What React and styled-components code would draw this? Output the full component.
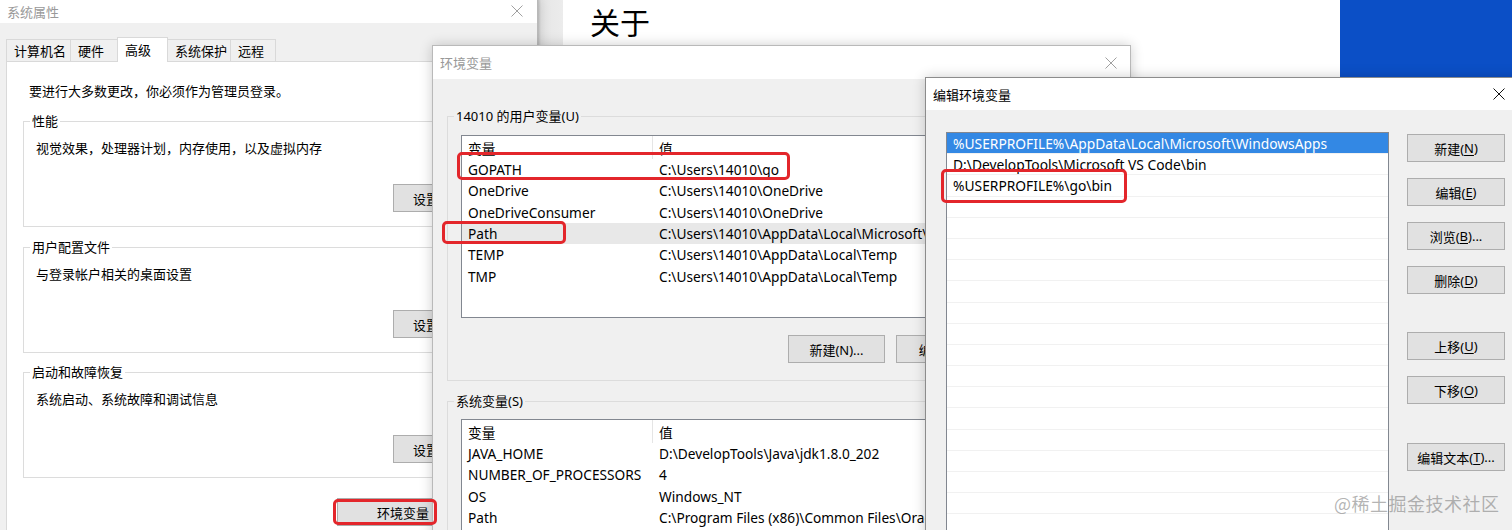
import React from "react";
import styled, { createGlobalStyle } from "styled-components";

const GlobalStyle = createGlobalStyle`
  html, body {
    margin: 0;
    padding: 0;
    background: #fff;
    overflow: hidden;
  }
  body {
    font-family: "Noto Sans", "Noto Sans CJK SC", sans-serif;
    font-size: 13px;
    color: #000;
  }
  * {
    box-sizing: border-box;
  }
`;

const Desktop = styled.div`
  position: relative;
  width: 1512px;
  height: 530px;
  overflow: hidden;
  background: #fff;
`;

// settings app in the background
const SettingsWindow = styled.div`
  position: absolute;
  left: 538px;
  top: 0;
  width: 974px;
  height: 530px;
  z-index: 1;
  display: flex;
`;

const SideShade = styled.div`
  width: 25px;
  background: linear-gradient(to right, #c9c9c9 0, #e6e6e6 3px, #ececec 100%);
`;

const SettingsMain = styled.div`
  flex: 1;
  background: #fff;
  padding: 5px 0 0 27px;

  h1 {
    margin: 0;
    font-family: "Noto Sans CJK SC", sans-serif;
    font-weight: 400;
    font-size: 30px;
    line-height: 32px;
  }
`;

const BlueTile = styled.div`
  width: 172px;
  background: #0b4fc6;
`;

// dialogs
const Win = styled.div`
  position: absolute;
  left: ${(p) => p.$x}px;
  top: ${(p) => p.$y}px;
  width: ${(p) => p.$w}px;
  height: ${(p) => p.$h}px;
  z-index: ${(p) => p.$z};
  display: flex;
  flex-direction: column;
  background: #f0f0f0;
  border: 1px solid ${(p) => (p.$active ? "#8c8c8c" : "#b9b9b9")};
  box-shadow: 0 0 12px rgba(0, 0, 0, 0.2);
`;

const TitleBar = styled.div`
  flex: none;
  height: ${(p) => p.$h}px;
  background: #fff;
  display: flex;
  align-items: center;
  justify-content: space-between;
  padding: 0 ${(p) => p.$closeRight}px 0 7px;
`;

const TitleText = styled.span`
  color: ${(p) => (p.$active ? "#000" : "#999")};
  font-family: "Noto Sans CJK SC", sans-serif;
  font-size: 13px;
`;

const CloseX = ({ active }) => (
  <svg width="12" height="12" viewBox="0 0 12 12">
    <path
      d="M0.5 0.5 L11.5 11.5 M11.5 0.5 L0.5 11.5"
      stroke={active ? "#111" : "#a0a0a0"}
      strokeWidth="1"
      fill="none"
    />
  </svg>
);

const WinBody = styled.div`
  flex: 1;
  padding: ${(p) => p.$pad};
  overflow: hidden;
`;

// system properties
const TabStrip = styled.div`
  display: flex;
  align-items: flex-end;
  height: 24px;
`;

const Tab = styled.div`
  width: ${(p) => p.$w}px;
  height: ${(p) => (p.$active ? 25 : 22)}px;
  margin-bottom: ${(p) => (p.$active ? -1 : 0)}px;
  padding: ${(p) => (p.$active ? "2px" : "0")} 0 0 7px;
  border: 1px solid #d9d9d9;
  border-bottom: none;
  background: ${(p) => (p.$active ? "#fff" : "#f0f0f0")};
  position: relative;
  z-index: ${(p) => (p.$active ? 1 : 0)};
  display: flex;
  align-items: ${(p) => (p.$active ? "flex-start" : "center")};
  font-family: "Noto Sans CJK SC", sans-serif;
  white-space: nowrap;
  margin-left: -1px;
  &:first-child {
    margin-left: 0;
  }
`;

const TabPanel = styled.div`
  width: 524px;
  height: 480px;
  background: #fff;
  border: 1px solid #d9d9d9;
  padding: 20px 16px 0 16px;
  font-family: "Noto Sans CJK SC", sans-serif;
`;

const Notice = styled.div`
  line-height: 18px;
  padding-left: 6px;
  margin-bottom: 12px;
`;

const GroupBox = styled.fieldset`
  margin: ${(p) => p.$mt || 0}px 0 0 0;
  padding: 0 ${(p) => p.$px}px ${(p) => p.$pb}px ${(p) => p.$px}px;
  border: 1px solid #dcdcdc;
  min-width: 0;
`;

const Legend = styled.legend`
  margin-left: ${(p) => p.$ml}px;
  padding: 0 2px;
  line-height: 18px;
  font-family: "Noto Sans", "Noto Sans CJK SC", sans-serif;
`;

const GroupText = styled.div`
  margin-top: 9px;
  line-height: 18px;
  white-space: nowrap;
`;

const ButtonRow = styled.div`
  display: flex;
  justify-content: flex-end;
  gap: ${(p) => p.$gap || 0}px;
  margin-top: ${(p) => p.$mt}px;
  padding-right: ${(p) => p.$pr || 0}px;
`;

const WinButton = styled.div`
  width: ${(p) => p.$w}px;
  height: 28px;
  flex: none;
  background: #e1e1e1;
  border: 1px solid #adadad;
  display: flex;
  align-items: center;
  justify-content: center;
  white-space: nowrap;
  margin-top: ${(p) => p.$mt || 0}px;
  font-family: "Noto Sans", "Noto Sans CJK SC", sans-serif;

  u {
    text-decoration: underline;
    text-underline-offset: 2px;
  }
`;

// environment variables
const VarList = styled.div`
  width: ${(p) => p.$w}px;
  height: ${(p) => p.$h}px;
  margin-top: ${(p) => p.$mt}px;
  background: #fff;
  border: 1px solid #828790;
  overflow: hidden;
  font-size: 13.7px;
`;

const ListRow = styled.div`
  display: flex;
  height: ${(p) => (p.$header ? 23 : 21.3)}px;
  background: ${(p) => (p.$hl ? "#e8e8e8" : "transparent")};
  white-space: nowrap;
`;

const Cell = styled.div`
  width: ${(p) => (p.$w ? `${p.$w}px` : "auto")};
  flex: ${(p) => (p.$w ? "none" : 1)};
  padding-left: 6px;
  display: flex;
  align-items: center;
  border-right: ${(p) => (p.$divider ? "1px solid #e5e5e5" : "none")};
`;

// edit path dialog
const EditArea = styled.div`
  display: flex;
  gap: 18px;
`;

const PathList = styled.div`
  width: 443px;
  height: 420px;
  background: #fff;
  border: 1px solid #828790;
  overflow: hidden;
  font-size: 13.8px;
`;

const PathRow = styled.div`
  height: 21.2px;
  display: flex;
  align-items: center;
  padding-left: 6px;
  border-bottom: 1px solid #f1f1f1;
  background: ${(p) => (p.$selected ? "#3388e4" : "#fff")};
  color: ${(p) => (p.$selected ? "#fff" : "#000")};
  white-space: nowrap;
`;

const ButtonColumn = styled.div`
  display: flex;
  flex-direction: column;
  padding-top: 2px;
`;

// annotations on top of the screenshot
const RedBox = styled.div`
  position: absolute;
  left: ${(p) => p.$x}px;
  top: ${(p) => p.$y}px;
  width: ${(p) => p.$w}px;
  height: ${(p) => p.$h}px;
  border: 3px solid #e3262b;
  border-radius: 5px;
  z-index: 10;
`;

const Watermark = styled.div`
  position: absolute;
  left: 1334px;
  top: 490px;
  z-index: 10;
  font-family: "Noto Sans CJK SC", sans-serif;
  font-size: 18px;
  line-height: 26px;
  color: rgba(130, 130, 130, 0.6);
  letter-spacing: 0.5px;
`;

const userVars = [
  ["GOPATH", "C:\\Users\\14010\\go"],
  ["OneDrive", "C:\\Users\\14010\\OneDrive"],
  ["OneDriveConsumer", "C:\\Users\\14010\\OneDrive"],
  ["Path", "C:\\Users\\14010\\AppData\\Local\\Microsoft\\WindowsApps;"],
  ["TEMP", "C:\\Users\\14010\\AppData\\Local\\Temp"],
  ["TMP", "C:\\Users\\14010\\AppData\\Local\\Temp"],
];

const sysVars = [
  ["JAVA_HOME", "D:\\DevelopTools\\Java\\jdk1.8.0_202"],
  ["NUMBER_OF_PROCESSORS", "4"],
  ["OS", "Windows_NT"],
  ["Path", "C:\\Program Files (x86)\\Common Files\\Oracle\\Java\\javapath"],
];

const paths = [
  "%USERPROFILE%\\AppData\\Local\\Microsoft\\WindowsApps",
  "D:\\DevelopTools\\Microsoft VS Code\\bin",
  "%USERPROFILE%\\go\\bin",
];

const groups = [
  { title: "性能", text: "视觉效果，处理器计划，内存使用，以及虚拟内存", mt: 0 },
  { title: "用户配置文件", text: "与登录帐户相关的桌面设置", mt: 11 },
  { title: "启动和故障恢复", text: "系统启动、系统故障和调试信息", mt: 10 },
];

function VarTable({ rows, height, mt, highlight }) {
  return (
    <VarList $w={640} $h={height} $mt={mt}>
      <ListRow $header>
        <Cell $w={191} $divider>变量</Cell>
        <Cell>值</Cell>
      </ListRow>
      {rows.map(([name, value]) => (
        <ListRow key={name + value} $hl={name === highlight}>
          <Cell $w={191}>{name}</Cell>
          <Cell>{value}</Cell>
        </ListRow>
      ))}
    </VarList>
  );
}

export default function App() {
  const emptyRows = Array.from({ length: 17 });

  return (
    <Desktop>
      <GlobalStyle />

      <SettingsWindow>
        <SideShade />
        <SettingsMain>
          <h1>关于</h1>
        </SettingsMain>
        <BlueTile />
      </SettingsWindow>

      {/* 系统属性 */}
      <Win $x={-1} $y={-2} $w={539} $h={540} $z={2}>
        <TitleBar $h={24} $closeRight={14}>
          <TitleText>系统属性</TitleText>
          <CloseX />
        </TitleBar>
        <WinBody $pad="14px 0 0 6px">
          <TabStrip>
            <Tab $w={65}>计算机名</Tab>
            <Tab $w={48}>硬件</Tab>
            <Tab $w={51} $active>高级</Tab>
            <Tab $w={64}>系统保护</Tab>
            <Tab $w={46}>远程</Tab>
          </TabStrip>
          <TabPanel>
            <Notice>要进行大多数更改，你必须作为管理员登录。</Notice>
            {groups.map((g) => (
              <GroupBox key={g.title} $mt={g.mt} $px={12} $pb={14}>
                <Legend $ml={-6}>{g.title}</Legend>
                <GroupText>{g.text}</GroupText>
                <ButtonRow $mt={27} $pr={41}>
                  <WinButton $w={66}>设置</WinButton>
                </ButtonRow>
              </GroupBox>
            ))}
            <ButtonRow $mt={20} $pr={44}>
              <WinButton $w={132}>环境变量</WinButton>
            </ButtonRow>
          </TabPanel>
        </WinBody>
      </Win>

      {/* 环境变量 */}
      <Win $x={432} $y={45} $w={699} $h={500} $z={3}>
        <TitleBar $h={33} $closeRight={13}>
          <TitleText>环境变量</TitleText>
          <CloseX />
        </TitleBar>
        <WinBody $pad="28px 15px 0 14px">
          <GroupBox $px={13} $pb={17}>
            <Legend $ml={-7}>14010 的用户变量(U)</Legend>
            <VarTable rows={userVars} height={183} mt={10} highlight="Path" />
            <ButtonRow $mt={17} $gap={11}>
              <WinButton $w={97}>新建(N)...</WinButton>
              <WinButton $w={97}>编辑(E)...</WinButton>
              <WinButton $w={97}>删除(D)</WinButton>
            </ButtonRow>
          </GroupBox>
          <GroupBox $mt={11} $px={13} $pb={17}>
            <Legend $ml={-7}>系统变量(S)</Legend>
            <VarTable rows={sysVars} height={200} mt={9} />
          </GroupBox>
        </WinBody>
      </Win>

      {/* 编辑环境变量 */}
      <Win $x={925} $y={77} $w={600} $h={470} $z={4} $active>
        <TitleBar $h={32} $closeRight={19}>
          <TitleText $active>编辑环境变量</TitleText>
          <CloseX active />
        </TitleBar>
        <WinBody $pad="22px 0 0 20px">
          <EditArea>
            <PathList>
              {paths.map((p, i) => (
                <PathRow key={p} $selected={i === 0}>{p}</PathRow>
              ))}
              {emptyRows.map((_, i) => (
                <PathRow key={i} />
              ))}
            </PathList>
            <ButtonColumn>
              <WinButton $w={98}>新建(<u>N</u>)</WinButton>
              <WinButton $w={98} $mt={16}>编辑(<u>E</u>)</WinButton>
              <WinButton $w={98} $mt={16}>浏览(<u>B</u>)...</WinButton>
              <WinButton $w={98} $mt={16}>删除(<u>D</u>)</WinButton>
              <WinButton $w={98} $mt={38}>上移(<u>U</u>)</WinButton>
              <WinButton $w={98} $mt={16}>下移(<u>O</u>)</WinButton>
              <WinButton $w={98} $mt={39}>编辑文本(<u>T</u>)...</WinButton>
            </ButtonColumn>
          </EditArea>
        </WinBody>
      </Win>

      <RedBox $x={457} $y={152} $w={333} $h={28} />
      <RedBox $x={442} $y={221} $w={124} $h={23} />
      <RedBox $x={941} $y={169} $w={186} $h={34} />
      <RedBox $x={333} $y={499} $w={104} $h={26} />

      <Watermark>@稀土掘金技术社区</Watermark>
    </Desktop>
  );
}
